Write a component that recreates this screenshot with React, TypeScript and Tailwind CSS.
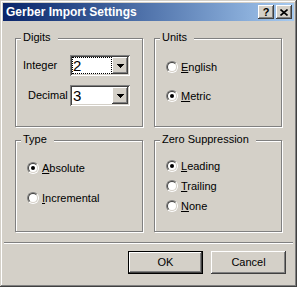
import type { ReactNode } from 'react'

const RAISED =
  'shadow-[inset_-1px_-1px_#404040,inset_1px_1px_#ffffff,inset_-2px_-2px_#808080,inset_2px_2px_#d4d0c8]'
const SUNKEN =
  'shadow-[inset_1px_1px_#808080,inset_-1px_-1px_#ffffff,inset_2px_2px_#404040,inset_-2px_-2px_#d4d0c8]'

function Group({ title, className, children }: { title: string; className: string; children: ReactNode }) {
  return (
    <div
      className={`relative border border-[#808080] shadow-[inset_1px_1px_#ffffff,1px_1px_#ffffff] ${className}`}
    >
      <span className="absolute -top-[8px] left-[5px] bg-[#d4d0c8] pl-[2px] pr-[7px] leading-[13px]">{title}</span>
      {children}
    </div>
  )
}

function Radio({ checked, hot, rest }: { checked?: boolean; hot: string; rest: string }) {
  return (
    <div className="flex h-[12px] items-center gap-[3px]">
      <span className="h-[12px] w-[12px] shrink-0 rounded-full border border-t-[#808080] border-r-white border-b-white border-l-[#808080]">
        <span className="flex h-full w-full items-center justify-center rounded-full border border-t-[#404040] border-r-[#d4d0c8] border-b-[#d4d0c8] border-l-[#404040] bg-white">
          {checked && <span className="h-[4px] w-[4px] rounded-full bg-black" />}
        </span>
      </span>
      <span className="leading-[13px]">
        <span className="underline">{hot}</span>
        {rest}
      </span>
    </div>
  )
}

function Combo({ value, focused }: { value: string; focused?: boolean }) {
  return (
    <div className={`flex h-[21px] w-[60px] bg-white p-[2px] ${SUNKEN}`}>
      <div
        className={`flex flex-1 items-center pl-[1px] text-[15px] leading-none ${
          focused ? 'outline-1 -outline-offset-1 outline-dotted outline-black' : ''
        }`}
      >
        {value}
      </div>
      <div className={`flex w-[16px] items-center justify-center bg-[#d4d0c8] ${RAISED}`}>
        <svg width="7" height="4" viewBox="0 0 7 4" shapeRendering="crispEdges">
          <rect x="0" y="0" width="7" height="1" fill="#000" />
          <rect x="1" y="1" width="5" height="1" fill="#000" />
          <rect x="2" y="2" width="3" height="1" fill="#000" />
          <rect x="3" y="3" width="1" height="1" fill="#000" />
        </svg>
      </div>
    </div>
  )
}

function Button({ label, isDefault }: { label: string; isDefault?: boolean }) {
  return (
    <div className={`h-[23px] w-[75px] ${isDefault ? 'border border-black' : ''}`}>
      <div className={`flex h-full w-full items-center justify-center bg-[#d4d0c8] ${RAISED}`}>{label}</div>
    </div>
  )
}

export default function App() {
  return (
    <div
      className={`flex h-[287px] w-[297px] flex-col bg-[#d4d0c8] p-[3px] font-['Liberation_Sans',Arial,sans-serif] text-[11px] text-black shadow-[inset_-1px_-1px_#404040,inset_1px_1px_#d4d0c8,inset_-2px_-2px_#808080,inset_2px_2px_#ffffff]`}
    >
      {/* caption */}
      <div className="flex h-[18px] items-center bg-gradient-to-r from-[#0a246a] to-[#a6caf0] pl-[3px] pr-[2px]">
        <span className="flex-1 text-[12px] font-bold leading-none text-white">Gerber Import Settings</span>
        <div className="flex gap-[2px]">
          <div className={`flex h-[14px] w-[16px] items-center justify-center bg-[#d4d0c8] ${RAISED}`}>
            <span className="text-[11px] font-bold leading-none">?</span>
          </div>
          <div className={`flex h-[14px] w-[16px] items-center justify-center bg-[#d4d0c8] ${RAISED}`}>
            <svg width="8" height="7" viewBox="0 0 8 7">
              <path d="M0.5 0.5 L7.5 6.5 M7.5 0.5 L0.5 6.5" stroke="#000" strokeWidth="1.6" />
            </svg>
          </div>
        </div>
      </div>

      <div className="grid grid-cols-[128px_128px] gap-x-[11px] gap-y-[13px] px-[12px] pt-[17px]">
        <Group title="Digits" className="h-[89px]">
          <div className="flex flex-col gap-[9px] pt-[16px]">
            <div className="flex items-center">
              <span className="w-[54px] pl-[7px]">Integer</span>
              <Combo value="2" focused />
            </div>
            <div className="flex items-center">
              <span className="w-[54px] pl-[12px]">Decimal</span>
              <Combo value="3" />
            </div>
          </div>
        </Group>

        <Group title="Units" className="h-[89px]">
          <div className="flex flex-col gap-[17px] pl-[11px] pt-[22px]">
            <Radio hot="E" rest="nglish" />
            <Radio checked hot="M" rest="etric" />
          </div>
        </Group>

        <Group title="Type" className="h-[92px]">
          <div className="flex flex-col gap-[18px] pl-[11px] pt-[21px]">
            <Radio checked hot="A" rest="bsolute" />
            <Radio hot="I" rest="ncremental" />
          </div>
        </Group>

        <Group title="Zero Suppression" className="h-[92px]">
          <div className="flex flex-col gap-[8px] pl-[11px] pt-[19px]">
            <Radio checked hot="L" rest="eading" />
            <Radio hot="T" rest="railing" />
            <Radio hot="N" rest="one" />
          </div>
        </Group>
      </div>

      <div className="mx-[1px] mt-[10px] h-[2px] border-t border-b border-t-[#808080] border-b-white" />

      <div className="mt-[7px] flex justify-end gap-[8px] pr-[8px]">
        <Button label="OK" isDefault />
        <Button label="Cancel" />
      </div>
    </div>
  )
}
